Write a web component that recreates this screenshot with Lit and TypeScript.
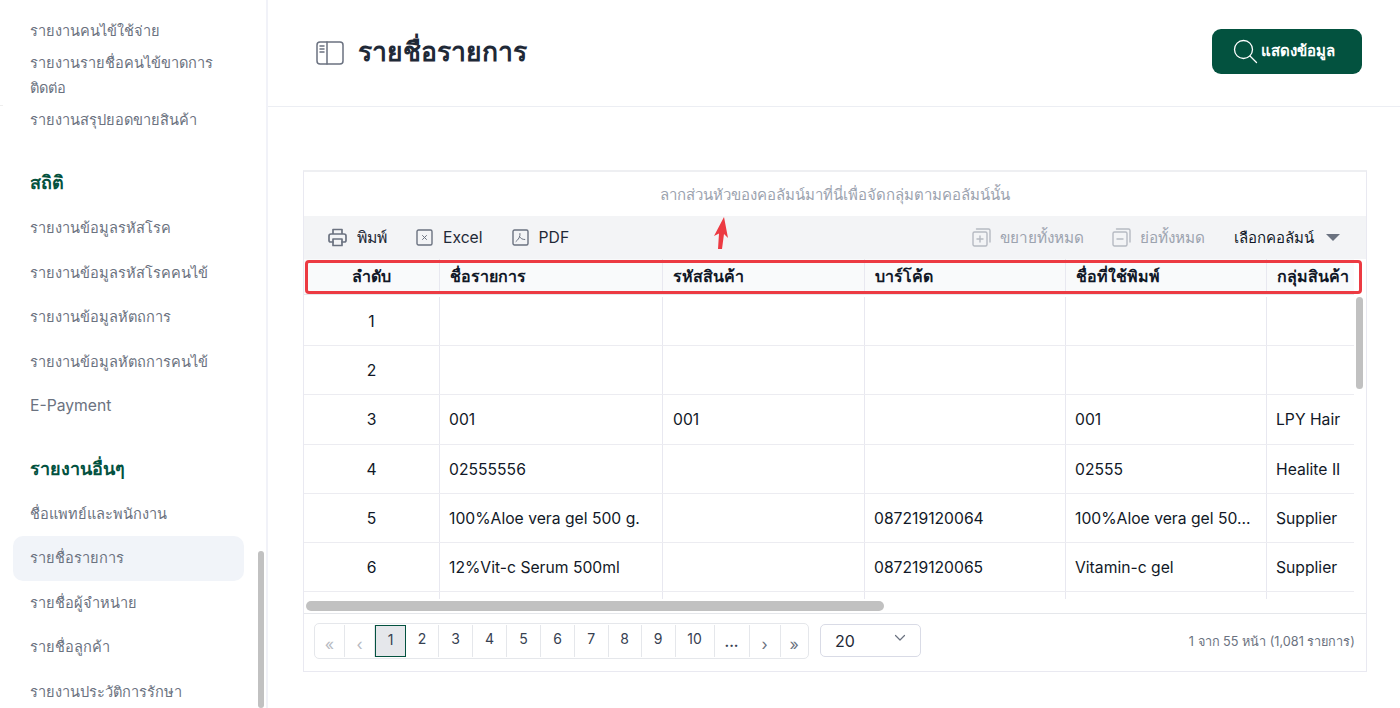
import { LitElement, html, css, svg } from "lit";
import { customElement } from "lit/decorators.js";

const rows = [
  ["1", "", "", "", "", ""],
  ["2", "", "", "", "", ""],
  ["3", "001", "001", "", "001", "LPY Hair"],
  ["4", "02555556", "", "", "02555", "Healite II"],
  ["5", "100%Aloe vera gel 500 g.", "", "087219120064", "100%Aloe vera gel 50...", "Supplier"],
  ["6", "12%Vit-c Serum 500ml", "", "087219120065", "Vitamin-c gel", "Supplier"],
];
const heads = ["ลำดับ", "ชื่อรายการ", "รหัสสินค้า", "บาร์โค้ด", "ชื่อที่ใช้พิมพ์", "กลุ่มสินค้า"];

@customElement("app-root")
export class AppRoot extends LitElement {
  static styles = css`
    :host { display: block; width: 1400px; height: 708px; overflow: hidden; background: #fff; position: relative;
      font-family: Inter, "Noto Sans", "Noto Sans CJK SC", sans-serif; color: #111827; }
    .page { display: flex; height: 708px; }
    aside { width: 266px; flex: none; border-right: 2px solid #f1f2f8; position: relative; overflow: hidden; padding-top: 15px; }
    .item { margin-left: 13px; width: 231px; box-sizing: border-box; padding: 10px 17px; font-size: 14.6px; line-height: 24.5px; color: #6b7280; }
    .latin { font-size: 15.7px; }
    .compact { padding: 4px 17px 3px; line-height: 25px; }
    .active { background: #f1f4f9; border-radius: 10px; }
    .sec { margin-left: 30px; font-size: 18px; font-weight: 700; color: #03523f; line-height: 24px; }
    .sec1 { margin-top: 35px; margin-bottom: 11px; }
    .sec2 { margin-top: 28px; margin-bottom: 11px; }
    .thumb { position: absolute; left: 258px; top: 551px; width: 6px; height: 157px; background: #c1c1c1; border-radius: 3px; }
    .tick { position: absolute; left: 0; top: 105px; width: 3px; height: 1px; background: #eee; }
    main { flex: 1; min-width: 0; display: flex; flex-direction: column; }
    header { box-sizing: border-box; border-bottom: 1px solid #eceef3; display: flex; align-items: center; padding: 0 38px 4px 48px; flex: none; height: 107px; }
    header > svg { margin-top: 3px; }
    header h1 { font-size: 26.5px; font-weight: 700; margin: 0 0 0 14px; color: #1f2937; flex: 1; line-height: 32px; }
    .go { width: 150px; height: 45px; background: #03523f; border-radius: 9px; color: #fff; display: flex; align-items: center; justify-content: center; gap: 3px; font-size: 15px; font-weight: 600; box-sizing: border-box; padding-right: 6px; }
    .grid { margin: 63px 0 0 35px; width: 1064px; height: 502px; box-sizing: border-box; border: 1px solid #e9e9f1; border-top: 2px solid #eeeff2; display: flex; flex-direction: column; position: relative; overflow: hidden; }
    .group { height: 44px; padding-top: 1px; box-sizing: border-box; flex: none; display: flex; align-items: center; justify-content: center; font-size: 15px; color: #9ca3af; }
    .bar { height: 43px; flex: none; background: #f3f4f6; display: flex; align-items: center; padding: 0 26px 0 24px; font-size: 15.7px; color: #1f2937; gap: 29px; }
    .tool { display: flex; align-items: center; gap: 10px; }
    .tool.print { font-size: 15.8px; font-weight: 500; }
    .spacer { flex: 1; }
    .off { color: #9ca3af; font-size: 15.3px; gap: 9px; }
    .off2 { margin-left: -1px; }
    .pick { font-size: 15px; font-weight: 500; color: #111827; }
    .caret { width: 0; height: 0; border-left: 7px solid transparent; border-right: 7px solid transparent; border-top: 7px solid #6b7280; margin-left: 2px; }
    .thead, .tr { display: grid; grid-template-columns: 136px 223px 202px 201px 201px 1fr; width: 1050px; }
    .thead { height: 36px; flex: none; background: #f9fafb; font-size: 16px; font-weight: 700; color: #111827; align-items: stretch; border-bottom: 1px solid #e5e7eb; box-sizing: border-box; }
    .thead > div { display: flex; align-items: center; padding: 0 10px; border-right: 1px solid #e8e8f0; white-space: nowrap; }
    .thead > div:first-child { justify-content: center; }
    .thead > div:last-child { border-right: 0; }
    .tbody { flex: none; height: 318px; overflow: hidden; position: relative; padding-top: 2px; box-sizing: border-box; }
    .tr { height: 49.2px; box-sizing: border-box; border-bottom: 1px solid #ececf1; font-size: 15.7px; color: #111827; }
    .tr.stub { height: 7px; border-bottom: 0; }
    .tr > div { display: flex; align-items: center; padding: 1px 10px 0; border-right: 1px solid #e8e8f0; white-space: nowrap; overflow: hidden; }
    .tr > div:first-child { justify-content: center; }
    .tr > div:last-child { border-right: 0; }
    .tr > div:nth-child(2), .tr > div:nth-child(n + 4) { padding-left: 9px; }
    .vthumb { position: absolute; left: 1052px; top: 2px; width: 7px; height: 92px; background: #c1c1c1; border-radius: 4px; }
    .hthumb { position: absolute; left: 2px; top: 306px; width: 578px; height: 10px; background: #c1c1c1; border-radius: 5px; }
    .foot { flex: 1; border-top: 1px solid #e5e7eb; display: flex; align-items: center; padding: 0 11px 3px 10px; }
    .pager { display: flex; height: 36px; border: 1px solid #e5e7eb; border-radius: 5px; box-sizing: border-box; align-items: stretch; padding: 1px 0; }
    .pager > div { display: flex; align-items: center; justify-content: center; font-size: 14px; color: #374151; border-right: 1px solid #e5e7eb; box-sizing: border-box; padding-bottom: 5px; }
    .pager > div:last-child { border-right: 0; }
    .pager .on { background: #e5e7eb; border: 1px solid #03523f; padding-bottom: 3px; }
    .pager .dim { color: #b6bac2; font-size: 16px; padding: 5px 0 0; }
    .pager .nav { font-size: 16px; color: #6b7280; padding: 5px 0 0; }
    .pager .more { font-weight: 700; padding: 0; }
    .size { margin-left: 11px; margin-bottom: 1px; width: 101px; height: 33px; border: 1px solid #d9dbe6; border-radius: 5px; box-sizing: border-box; display: flex; align-items: center; justify-content: space-between; padding: 0 14px; font-size: 16px; color: #1f2937; }
    .size svg { margin-bottom: 6px; }
    .count { margin-left: auto; font-size: 12.7px; color: #6b7280; }
    .mark { position: absolute; left: 305px; top: 260px; width: 1057px; height: 34px; box-sizing: border-box; border: 3px solid #ec3a42; border-radius: 4px; pointer-events: none; }
    .arrow { position: absolute; left: 712px; top: 216px; pointer-events: none; }
  `;

  private ic(w: number, h: number, body: unknown, color = "#6b7280", sw = 1.4) {
    return html`<svg width=${w} height=${h} viewBox="0 0 ${w} ${h}" fill="none" stroke=${color} stroke-width=${sw} stroke-linejoin="round" stroke-linecap="round">${body}</svg>`;
  }

  render() {
    const pages: [string, number, string?][] = [["«", 30, "dim"], ["‹", 30, "dim"], ["1", 31, "on"], ["2", 33], ["3", 34], ["4", 34], ["5", 34], ["6", 34], ["7", 33.5], ["8", 33], ["9", 34], ["10", 39], ["...", 35, "more"], ["›", 31, "nav"], ["»", 27.5, "nav"]];
    return html`
      <div class="page">
        <aside>
          <div class="item compact">รายงานคนไข้ใช้จ่าย</div>
          <div class="item compact">รายงานรายชื่อคนไข้ขาดการติดต่อ</div>
          <div class="item compact">รายงานสรุปยอดขายสินค้า</div>
          <div class="sec sec1">สถิติ</div>
          <div class="item">รายงานข้อมูลรหัสโรค</div>
          <div class="item">รายงานข้อมูลรหัสโรคคนไข้</div>
          <div class="item">รายงานข้อมูลหัตถการ</div>
          <div class="item">รายงานข้อมูลหัตถการคนไข้</div>
          <div class="item latin">E-Payment</div>
          <div class="sec sec2">รายงานอื่นๆ</div>
          <div class="item">ชื่อแพทย์และพนักงาน</div>
          <div class="item active">รายชื่อรายการ</div>
          <div class="item">รายชื่อผู้จำหน่าย</div>
          <div class="item">รายชื่อลูกค้า</div>
          <div class="item">รายงานประวัติการรักษา</div>
          <div class="thumb"></div>
          <div class="tick"></div>
        </aside>
        <main>
          <header>
            ${this.ic(28, 24, svg`<rect x="1" y="1" width="26" height="22" rx="3"/><path d="M11 1v22M4 5h4M4 8h4M4 11h4"/>`, "#6b7280", 1.5)}
            <h1>รายชื่อรายการ</h1>
            <div class="go">
              ${this.ic(25, 25, svg`<circle cx="10.500" cy="10.500" r="9"/><path d="M17 17l6.500 6.500"/>`, "#fff", 1.3)}
              <span>แสดงข้อมูล</span>
            </div>
          </header>
          <div class="grid">
            <div class="group">ลากส่วนหัวของคอลัมน์มาที่นี่เพื่อจัดกลุ่มตามคอลัมน์นั้น</div>
            <div class="bar">
              <div class="tool print">${this.ic(19, 19, svg`<path d="M5 6V1.500h9V6M5 14H2.500A1.500 1.500 0 0 1 1 12.500V8a2 2 0 0 1 2-2h13a2 2 0 0 1 2 2v4.500a1.500 1.500 0 0 1-1.500 1.500H14"/><rect x="5" y="11" width="9" height="6.500"/>`, "#6b7280", 1.7)}<span>พิมพ์</span></div>
              <div class="tool">${this.ic(17, 17, svg`<rect x="1" y="1" width="15" height="15" rx="1.500"/><path d="M6.500 6.500l4 4M10.500 6.500l-4 4" stroke-width="1"/>`)}<span>Excel</span></div>
              <div class="tool">${this.ic(17, 17, svg`<rect x="1" y="1" width="15" height="15" rx="1.500"/><path d="M8 4.500c.5 3-1.500 6-4 8M7.800 8c1 1.500 2.500 2.500 5 2.500" stroke-width="1"/>`)}<span>PDF</span></div>
              <div class="spacer"></div>
              <div class="tool off">${this.ic(19, 19, svg`<rect x="1" y="4" width="14" height="14" rx="1.500"/><path d="M4.500 1h12a1.500 1.500 0 0 1 1.500 1.500V14M8 8v6M5 11h6"/>`, "#b6bac2")}<span>ขยายทั้งหมด</span></div>
              <div class="tool off off2">${this.ic(19, 19, svg`<rect x="1" y="4" width="14" height="14" rx="1.500"/><path d="M4.500 1h12a1.500 1.500 0 0 1 1.500 1.500V14M5 11h6"/>`, "#b6bac2")}<span>ย่อทั้งหมด</span></div>
              <div class="tool pick"><span>เลือกคอลัมน์</span><div class="caret"></div></div>
            </div>
            <div class="thead">${heads.map((h) => html`<div>${h}</div>`)}</div>
            <div class="tbody">
              ${rows.map((r) => html`<div class="tr">${r.map((c) => html`<div>${c}</div>`)}</div>`)}
              <div class="tr stub">${heads.map(() => html`<div></div>`)}</div>
              <div class="vthumb"></div>
              <div class="hthumb"></div>
            </div>
            <div class="foot">
              <div class="pager">
                ${pages.map(([t, w, c]) => html`<div class=${c ?? ""} style="width:${w}px">${t}</div>`)}
              </div>
              <div class="size"><span>20</span>${this.ic(12, 8, svg`<path d="M1.500 1.500L6 6l4.500-4.500"/>`, "#6b7280", 1.2)}</div>
              <div class="count">1 จาก 55 หน้า (1,081 รายการ)</div>
            </div>
          </div>
        </main>
      </div>
      <div class="mark"></div>
      <svg class="arrow" width="18" height="36" viewBox="0 0 18 36"><path d="M12 1L16 22L12 18L10 33L6 33L7 17.500L2 20Z" fill="#ec3a42"/></svg>
    `;
  }
}
